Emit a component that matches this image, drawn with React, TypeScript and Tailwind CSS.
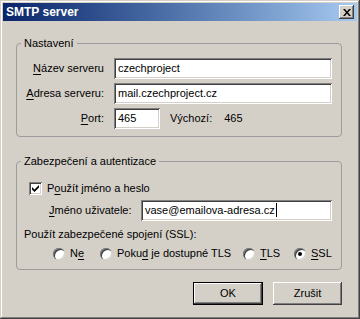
import React from 'react';

const sunken =
  'bg-white shadow-[inset_1px_1px_#808080,inset_-1px_-1px_#ffffff,inset_2px_2px_#404040,inset_-2px_-2px_#d4d0c8]';
const raised =
  'bg-[#d4d0c8] shadow-[inset_-1px_-1px_#404040,inset_1px_1px_#ffffff,inset_-2px_-2px_#808080,inset_2px_2px_#d4d0c8]';

const U: React.FC<{ children: React.ReactNode }> = ({ children }) => (
  <span className="underline underline-offset-[2px]">{children}</span>
);

const Field: React.FC<{ value: string; className?: string; caret?: boolean }> = ({ value, className, caret }) => (
  <div className={`${sunken} h-[21px] flex items-center pl-[4px] whitespace-nowrap ${className ?? ''}`}>
    <span>{value}</span>
    {caret && <span className="ml-[1px] w-[1px] h-[14px] bg-black" />}
  </div>
);

const Radio: React.FC<{ checked?: boolean; className?: string; children: React.ReactNode }> = ({ checked, className, children }) => (
  <div className={`flex items-center gap-[5px] whitespace-nowrap shrink-0 ${className ?? ''}`}>
    <span className="w-[12px] h-[12px] shrink-0 rounded-full bg-white shadow-[inset_1px_1px_#808080,inset_2px_2px_#404040,inset_-1px_-1px_#d4d0c8] flex items-center justify-center">
      {checked && <span className="w-[4px] h-[4px] rounded-full bg-black" />}
    </span>
    <span>{children}</span>
  </div>
);

const Group: React.FC<{ title: string; className?: string; children: React.ReactNode }> = ({ title, className, children }) => (
  <div className={`relative border border-[#9c9c9c] rounded-[4px] ${className ?? ''}`}>
    <span className="absolute left-[4px] top-[-8px] px-[3px] bg-[#d4d0c8] leading-[14px] whitespace-nowrap">{title}</span>
    {children}
  </div>
);

const App: React.FC = () => {
  return (
    <div className="w-[360px] h-[319px] bg-[#d4d0c8] p-[3px] flex flex-col text-[11px] text-black font-['Liberation_Sans',Arial,sans-serif] shadow-[inset_-1px_-1px_#404040,inset_1px_1px_#d4d0c8,inset_-2px_-2px_#808080,inset_2px_2px_#ffffff]">
      {/* title bar */}
      <div className="h-[18px] shrink-0 flex items-center justify-between pl-[3px] pr-[3px] bg-gradient-to-r from-[#0a246a] to-[#a6caf0]">
        <span className="text-white font-bold text-[12px]">SMTP server</span>
        <div className={`${raised} w-[15px] h-[14px] flex items-center justify-center`}>
          <svg width="8" height="7" viewBox="0 0 8 7">
            <path d="M0 0h2l2 2.5L6 0h2L5 3.5 8 7H6L4 4.5 2 7H0l3-3.5z" fill="#000" />
          </svg>
        </div>
      </div>

      <div className="flex flex-col pl-[13px] pr-[15px] pt-[22px]">
        <Group title="Nastavení" className="pt-[14px] pb-[7px] pr-[9px]">
          <div className="grid grid-cols-[87px_1fr] gap-x-[10px] gap-y-[4px] items-center">
            <span className="text-right"><U>N</U>ázev serveru</span>
            <Field value="czechproject" />
            <span className="text-right"><U>A</U>dresa serveru:</span>
            <Field value="mail.czechproject.cz" />
            <span className="text-right"><U>P</U>ort:</span>
            <div className="flex items-center">
              <Field value="465" className="w-[46px]" />
              <span className="ml-[10px]">Výchozí:</span>
              <span className="ml-[12px]">465</span>
            </div>
          </div>
        </Group>

        <Group title="Zabezpečení a autentizace" className="mt-[24px] pt-[18px] pb-[8px] pr-[9px]">
          <div className="flex items-center pl-[12px] gap-[5px]">
            <span className={`${sunken} w-[13px] h-[13px] flex items-center justify-center`}>
              <svg width="7" height="7" viewBox="0 0 7 7">
                <path d="M0 2l2.5 2.5L7 0v2.5L2.5 7 0 4.5z" fill="#000" />
              </svg>
            </span>
            <span>P<U>o</U>užít jméno a heslo</span>
          </div>
          <div className="flex items-center mt-[3px] pl-[32px]">
            <span className="w-[92px] whitespace-nowrap"><U>J</U>méno uživatele:</span>
            <Field value="vase@emailova-adresa.cz" caret className="flex-1" />
          </div>
          <div className="mt-[6px] pl-[7px] leading-[14px]">Použít zabezpečené spojení (SSL):</div>
          <div className="flex items-center mt-[6px] pl-[36px] h-[14px]">
            <Radio className="w-[47px]">N<U>e</U></Radio>
            <Radio className="w-[143px]">Poku<U>d</U> je dostupné TLS</Radio>
            <Radio className="w-[51px]"><U>T</U>LS</Radio>
            <Radio checked><U>S</U>SL</Radio>
          </div>
        </Group>

        <div className="flex justify-end gap-[10px] mt-[12px]">
          <button className="w-[70px] h-[23px] bg-[#d4d0c8] shadow-[inset_0_0_0_1px_#000,inset_-2px_-2px_#404040,inset_2px_2px_#ffffff,inset_-3px_-3px_#808080]">OK</button>
          <button className={`${raised} w-[69px] h-[23px]`}>Zrušit</button>
        </div>
      </div>
    </div>
  );
};

export default App;
